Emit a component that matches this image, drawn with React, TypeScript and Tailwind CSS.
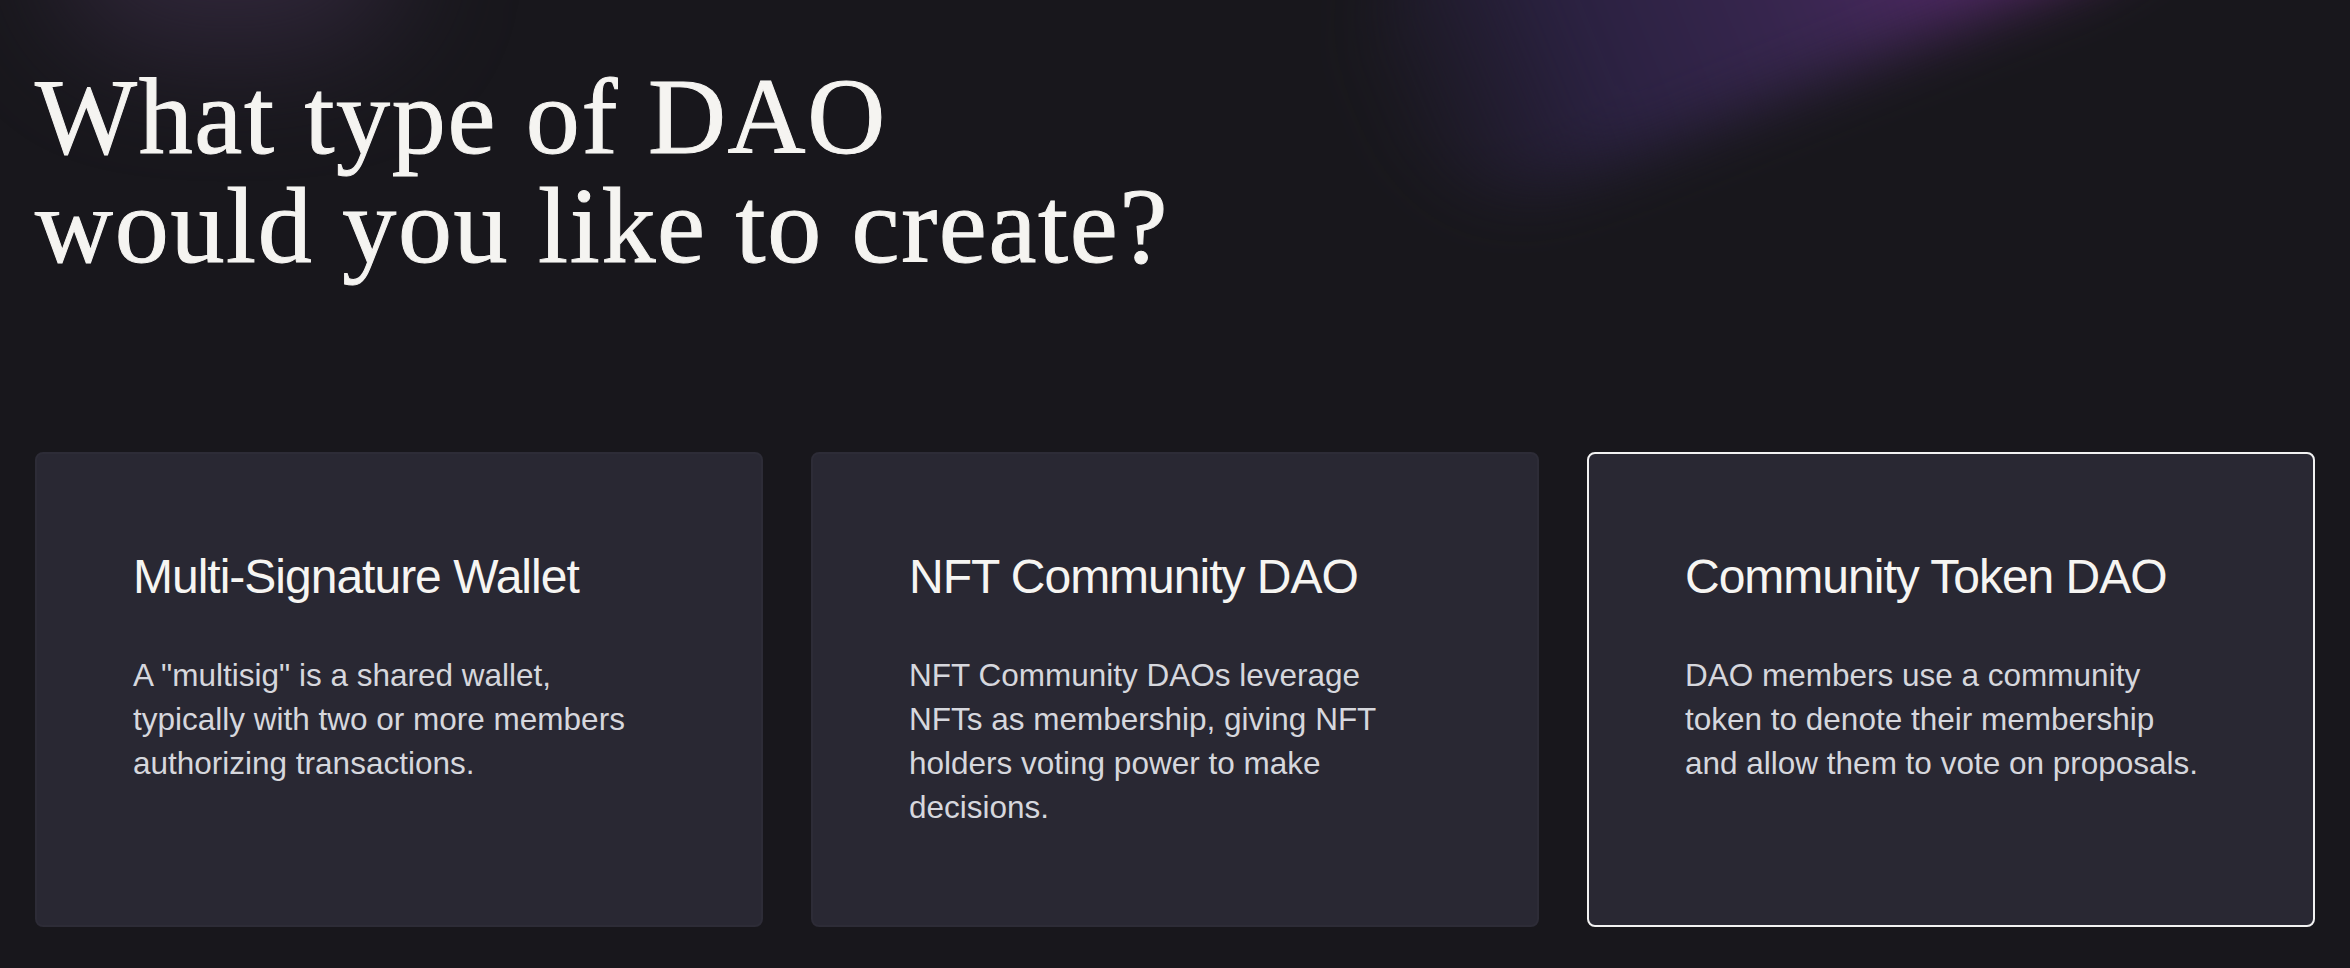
import React from "react";

const cards = [
  {
    title: "Multi-Signature Wallet",
    lines: ['A "multisig" is a shared wallet,', "typically with two or more members", "authorizing transactions."],
    selected: false,
  },
  {
    title: "NFT Community DAO",
    lines: ["NFT Community DAOs leverage", "NFTs as membership, giving NFT", "holders voting power to make", "decisions."],
    selected: false,
  },
  {
    title: "Community Token DAO",
    lines: ["DAO members use a community", "token to denote their membership", "and allow them to vote on proposals."],
    selected: true,
  },
];

export default function App() {
  return (
    <div className="relative w-[2350px] h-[968px] overflow-hidden bg-[#18171c]">
      {/* decorative glows */}
      <div className="pointer-events-none absolute left-[60px] top-[-150px] w-[340px] h-[200px] rounded-full bg-[#3a2d46] opacity-70 blur-[60px]" />
      <div className="pointer-events-none absolute left-[1340px] top-[-200px] w-[860px] h-[290px] rotate-[-22deg] rounded-full bg-[linear-gradient(90deg,rgba(40,32,60,0)_0%,#2a2140_25%,#38264f_50%,#512866_72%,#5e2a6a_88%,#5e2a6a_100%)] blur-[30px]" />

      <div className="relative flex flex-col px-[35px] pt-[62px]">
        <h1 className="font-['Liberation_Serif',serif] text-[108px] leading-[109px] text-[#f5f4f1] tracking-[1.7px] [-webkit-text-stroke:1px_#f5f4f1]">
          What type of DAO
          <br />
          would you like to create?
        </h1>

        <div className="mt-[172px] grid grid-cols-3 gap-[48px]">
          {cards.map((c) => (
            <div
              key={c.title}
              className={
                c.selected
                  ? "h-[475px] rounded-[8px] border-2 border-[#f2f2f2] bg-[#292833] px-[96px] pt-[94px]"
                  : "h-[475px] rounded-[8px] border-2 border-[#2d2c37] bg-[#292833] px-[96px] pt-[94px]"
              }
            >
              <h2 className="font-['Liberation_Sans',Arial,sans-serif] text-[48px] leading-[58px] text-[#f6f5f2] tracking-[-1px]">
                {c.title}
              </h2>
              <p className="mt-[47px] flex flex-col font-['Liberation_Sans',Arial,sans-serif] text-[31.5px] leading-[44px] text-[#d6d7dd] tracking-[0px]">
                {c.lines.map((l) => (
                  <span key={l} className="whitespace-nowrap">
                    {l}
                  </span>
                ))}
              </p>
            </div>
          ))}
        </div>
      </div>
    </div>
  );
}
